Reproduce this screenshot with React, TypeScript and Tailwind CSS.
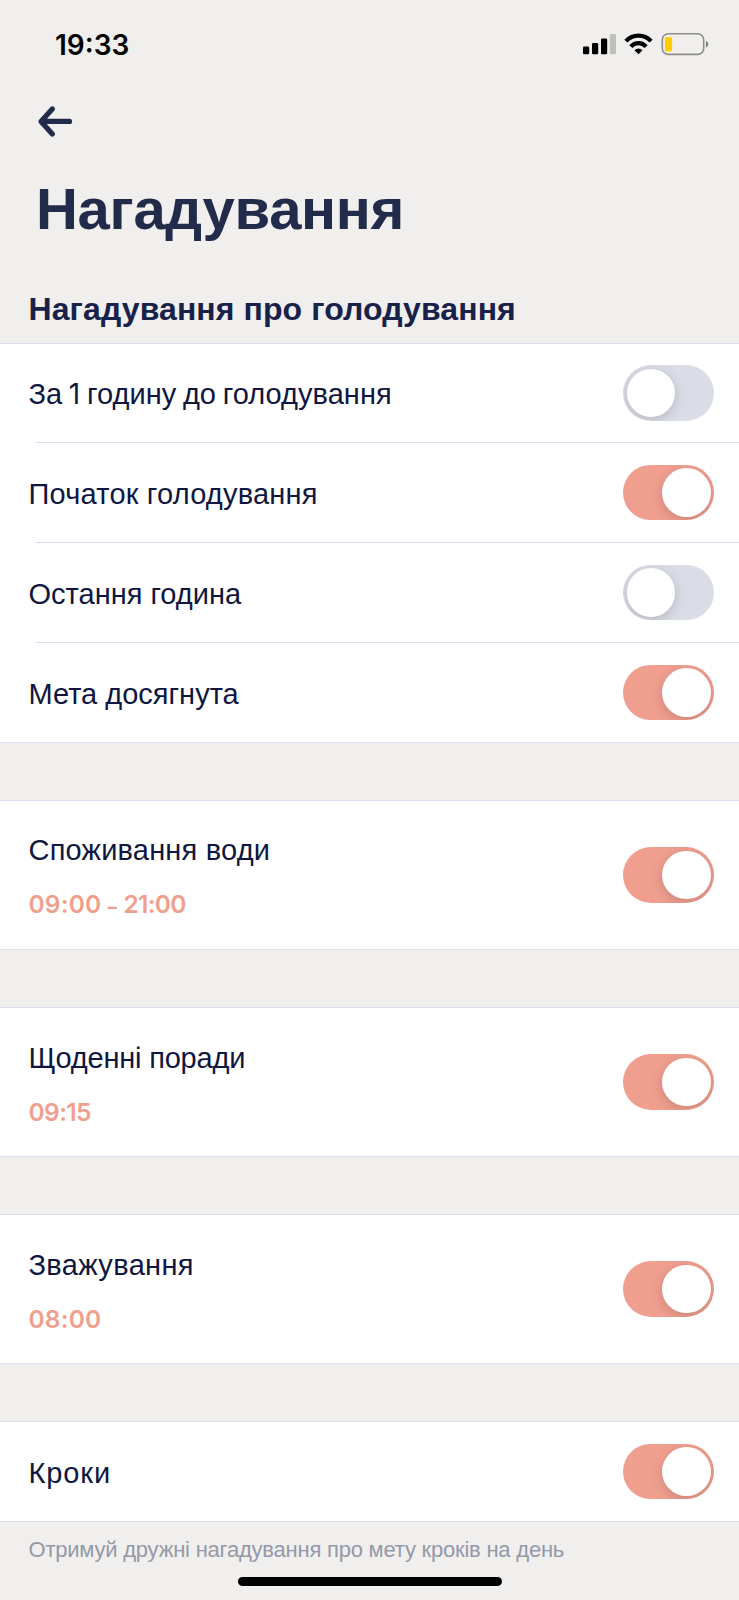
import { useState, type ReactNode } from 'react'
import clsx from 'clsx'

interface Reminder {
  id: string
  label: ReactNode
  time?: ReactNode
  enabled: boolean
  tracking: string
}

const fastingReminders: Reminder[] = [
  {
    id: 'before',
    label: <>За <span className="font-['Inter',sans-serif] text-[28px]">1</span> годину до голодування</>,
    enabled: false,
    tracking: 'tracking-[0.05px] [word-spacing:-1.5px]',
  },
  { id: 'start', label: 'Початок голодування', enabled: true, tracking: 'tracking-[0.2px]' },
  { id: 'last-hour', label: 'Остання година', enabled: false, tracking: 'tracking-normal' },
  { id: 'goal', label: 'Мета досягнута', enabled: true, tracking: 'tracking-normal' },
]

const dailyReminders: Reminder[] = [
  {
    id: 'water',
    label: 'Споживання води',
    time: <>09:00 <span className="text-[18px] font-extrabold">–</span> <span className="tracking-[-0.7px]">21:00</span></>,
    enabled: true,
    tracking: 'tracking-[0.2px]',
  },
  {
    id: 'tips',
    label: 'Щоденні поради',
    time: <span className="tracking-[-0.6px]">09:15</span>,
    enabled: true,
    tracking: 'tracking-[-0.2px]',
  },
  { id: 'weight', label: 'Зважування', time: '08:00', enabled: true, tracking: 'tracking-[0.35px]' },
]

function StatusBar() {
  return (
    <div className="flex h-[88px] items-center justify-between pl-[55px] pr-[30px] text-black">
      <span className="pt-px font-['Inter',sans-serif] text-[28px] font-semibold leading-8">19:33</span>
      <svg width="128" height="24" viewBox="0 0 128 24">
        <rect x="2" y="14.500" width="6.200" height="7.700" rx="1.300" />
        <rect x="11" y="11" width="6.200" height="11.200" rx="1.300" />
        <rect x="20" y="6.500" width="6.200" height="15.700" rx="1.300" />
        <rect x="28.800" y="2" width="6.200" height="20.200" rx="1.300" fill="#bfbfbe" />
        <g fill="none" stroke="#000" strokeWidth="4.200">
          <path d="M44.900 9.100a17.300 17.300 0 0 1 25.200 0" />
          <path d="M49.900 14.600a10 10 0 0 1 15.200 0" />
        </g>
        <path d="M57.500 22.200l-4-3.900a5.600 5.600 0 0 1 8 0z" />
        <rect x="81.300" y="1.800" width="41.400" height="20.600" rx="6" fill="none" stroke="#8d8d8c" strokeWidth="1.600" />
        <rect x="83.900" y="5" width="7.200" height="14.500" rx="1.800" fill="#ffcc00" />
        <path d="M125 9c3 1.300 3 5.200 0 6.500z" fill="#7c7c7b" />
      </svg>
    </div>
  )
}

function Toggle({ on, onChange }: { on: boolean; onChange: () => void }) {
  return (
    <button
      role="switch"
      aria-checked={on}
      onClick={onChange}
      className={clsx(
        'flex h-[55.5px] w-[91px] shrink-0 items-center overflow-hidden rounded-full px-[3.5px] transition-colors',
        on ? 'justify-end bg-[#f09f8f]' : 'justify-start bg-[#dadce6]'
      )}
    >
      <span className="size-[48.5px] rounded-full bg-white shadow-[0_3px_12px_rgba(0,0,0,0.17)]" />
    </button>
  )
}

function ReminderLabel({ reminder }: { reminder: Reminder }) {
  return (
    <p className={clsx('text-[29px] leading-8 text-[#0f1740]', reminder.tracking)}>
      {reminder.label}
    </p>
  )
}

export default function App() {
  const [enabled, setEnabled] = useState<Record<string, boolean>>(() =>
    Object.fromEntries([...fastingReminders, ...dailyReminders].map(r => [r.id, r.enabled]))
  )
  const [steps, setSteps] = useState(true)

  function toggle(id: string) {
    setEnabled(prev => ({ ...prev, [id]: !prev[id] }))
  }

  return (
    <div className="flex h-[1600px] w-[739px] flex-col overflow-hidden bg-[#f0efed] font-['Liberation_Sans',Arial,sans-serif] text-[#232b4a]">
      <StatusBar />

      {/* Header */}
      <header className="h-[174px] pl-[35px] pt-4">
        <button aria-label="Назад" className="block">
          <svg width="40" height="36" viewBox="0 0 40 36" fill="none" stroke="#232b4a" strokeWidth="5.200" strokeLinecap="round" strokeLinejoin="round">
            <path d="M34.500 17.400H6.500M17.300 5L6 17.400l11.300 12.600" />
          </svg>
        </button>
        <h1 className="ml-px mt-[37px] text-[58px] font-bold leading-[64px] tracking-[-0.3px]">Нагадування</h1>
      </header>

      <h2 className="h-[81px] pl-[28.5px] pt-[29px] text-[32px] font-bold leading-9 tracking-[0.1px] text-[#18214a]">
        Нагадування про голодування
      </h2>

      <section className="h-[400px] border-y border-[#dcdff0] bg-white">
        {fastingReminders.map((r, i) => (
          <div key={r.id}>
            {i > 0 && <div className="ml-9 h-px bg-[#d8dcee]" />}
            <div className={clsx('flex items-center justify-between pl-[28.5px] pr-[25px]', i === 0 ? 'h-[98px]' : 'h-[99px]')}>
              <div className="pt-[2px]">
                <ReminderLabel reminder={r} />
              </div>
              <Toggle on={enabled[r.id]} onChange={() => toggle(r.id)} />
            </div>
          </div>
        ))}
      </section>

      {dailyReminders.map(r => (
        <section key={r.id} className="mt-[57px] flex h-[150px] items-center justify-between border-y border-[#dcdff0] bg-white pl-[28.5px] pr-[25px]">
          <div className="pt-[6px]">
            <ReminderLabel reminder={r} />
            <p className="mt-[22px] font-['Inter',sans-serif] text-[24.5px] font-semibold leading-8 tracking-[0.2px] text-[#f09f8f]">{r.time}</p>
          </div>
          <Toggle on={enabled[r.id]} onChange={() => toggle(r.id)} />
        </section>
      ))}

      <section className="mt-[57px] flex h-[101px] items-center justify-between border-y border-[#dcdff0] bg-white pl-[28.5px] pr-[25px]">
        <p className="pt-[2px] text-[29px] leading-8 tracking-[0.9px] text-[#0f1740]">Кроки</p>
        <Toggle on={steps} onChange={() => setSteps(!steps)} />
      </section>

      <p className="mt-[14px] pl-[28.5px] text-[22px] leading-7 tracking-[-0.22px] text-[#9499a9]">
        Отримуй дружні нагадування про мету кроків на день
      </p>
      <div className="mx-auto mt-[13px] h-[9px] w-[264px] rounded-full bg-black" />
    </div>
  )
}
